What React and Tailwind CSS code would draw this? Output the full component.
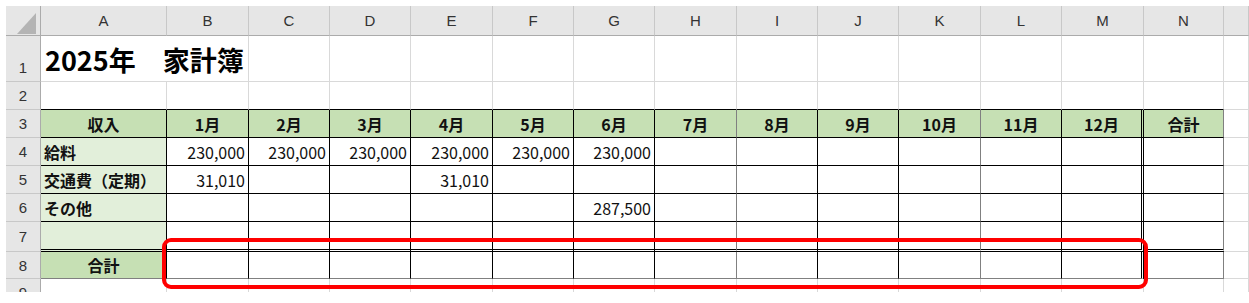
import React from "react";

const LETTERS = ["A", "B", "C", "D", "E", "F", "G", "H", "I", "J", "K", "L", "M", "N", ""];
const MONTHS = ["1月", "2月", "3月", "4月", "5月", "6月", "7月", "8月", "9月", "10月", "11月", "12月"];

// income table, columns A..N (index 0..13)
const BODY = {
  4: { label: "給料", values: { 1: "230,000", 2: "230,000", 3: "230,000", 4: "230,000", 5: "230,000", 6: "230,000" } },
  5: { label: "交通費（定期）", values: { 1: "31,010", 4: "31,010" } },
  6: { label: "その他", values: { 6: "287,500" } },
  7: { label: "", values: {} },
};

const jp = "font-['Noto_Sans_CJK_JP',sans-serif]";

function borders(r, c) {
  const inTable = r >= 3 && r <= 8 && c <= 13;
  let right = "border-r border-r-[#d9d9d9]";
  let bottom = "border-b border-b-[#d9d9d9]";
  if (inTable) {
    if (c === 12) right = "border-r-[3px] border-double border-r-black";
    else if (c === 7 || c === 10 || c === 13) right = "border-r border-r-[#808080]";
    else right = "border-r border-r-black";
    if (r === 7) bottom = "border-b-[3px] border-double border-b-black";
    else if (r === 8) bottom = "border-b border-b-[#808080]";
    else bottom = "border-b border-b-black";
  } else if (r === 2 && c <= 13) {
    bottom = "border-b border-b-black";
  }
  return `${right} ${bottom}`;
}

function cellContent(r, c) {
  if (r === 3 && c <= 13) {
    const text = c === 0 ? "収入" : c === 13 ? "合計" : MONTHS[c - 1];
    return { bg: "bg-[#c6e0b4]", align: "justify-center", bold: true, text };
  }
  if (BODY[r]) {
    if (c === 0) return { bg: "bg-[#e2efda]", align: "justify-start pl-[3px]", bold: true, text: BODY[r].label };
    return { bg: "", align: "justify-end pr-[3px]", bold: false, text: BODY[r].values[c] || "" };
  }
  if (r === 8 && c === 0) return { bg: "bg-[#c6e0b4]", align: "justify-center", bold: true, text: "合計" };
  return { bg: "", align: "justify-start", bold: false, text: "" };
}

function RowHead({ n, bottom }) {
  return (
    <div
      className={`flex justify-center bg-[#e6e6e6] border-r border-r-[#ababab] border-b border-b-[#c8c8c8] font-['Liberation_Sans',sans-serif] text-[15px] leading-none text-[#333] ${
        bottom ? "items-end pb-[6px]" : "items-center"
      }`}
    >
      {n}
    </div>
  );
}

function Row({ r }) {
  const cells = [];
  for (let c = 0; c < 15; c++) {
    const { bg, align, bold, text } = cellContent(r, c);
    cells.push(
      <div
        key={c}
        className={`flex items-center whitespace-nowrap overflow-hidden ${jp} text-[16px] leading-none text-[#111] ${
          bold ? "font-bold" : ""
        } ${bg} ${align} ${borders(r, c)}`}
      >
        {text}
      </div>
    );
  }
  return (
    <>
      <RowHead n={r} />
      {cells}
    </>
  );
}

export default function App() {
  return (
    <div className="relative w-[1249px] h-[303px] bg-white pt-[6px] pl-[6px] overflow-hidden">
      <div className="h-[286px] overflow-hidden">
        <div className="grid grid-cols-[35px_126px_82px_81px_81px_82px_81px_81px_82px_81px_81px_82px_81px_82px_80px_1fr] grid-rows-[30px_46px_28px_28px_28px_28px_28px_30px_27px_28px]">
          {/* corner */}
          <div className="relative bg-[#e6e6e6] border-r border-r-[#ababab] border-b border-b-[#ababab]">
            <svg className="absolute right-[4px] bottom-[1px]" width="19" height="21" viewBox="0 0 19 21">
              <polygon points="19,0 19,21 0,21" fill="#b4b4b4" />
            </svg>
          </div>
          {LETTERS.map((l, i) => (
            <div
              key={i}
              className="flex items-center justify-center bg-[#e6e6e6] border-r border-r-[#c8c8c8] border-b border-b-[#ababab] font-['Liberation_Sans',sans-serif] text-[15px] leading-none text-[#333]"
            >
              {l}
            </div>
          ))}

          {/* row 1: title spans A:B */}
          <RowHead n={1} bottom />
          <div
            className={`col-span-2 flex items-end pb-[8px] pl-[4px] whitespace-nowrap ${jp} text-[27px] font-bold leading-none text-black border-r border-r-[#d9d9d9] border-b border-b-[#d9d9d9]`}
          >
            2025年　家計簿
          </div>
          {Array.from({ length: 13 }, (_, i) => (
            <div key={i} className="border-r border-r-[#d9d9d9] border-b border-b-[#d9d9d9]" />
          ))}

          {[2, 3, 4, 5, 6, 7, 8, 9].map((r) => (
            <Row key={r} r={r} />
          ))}
        </div>
      </div>

      {/* highlight round the total row */}
      <div className="absolute left-[162px] top-[238px] w-[986px] h-[51px] border-[4px] border-[#ff0000] rounded-[9px]" />
    </div>
  );
}
